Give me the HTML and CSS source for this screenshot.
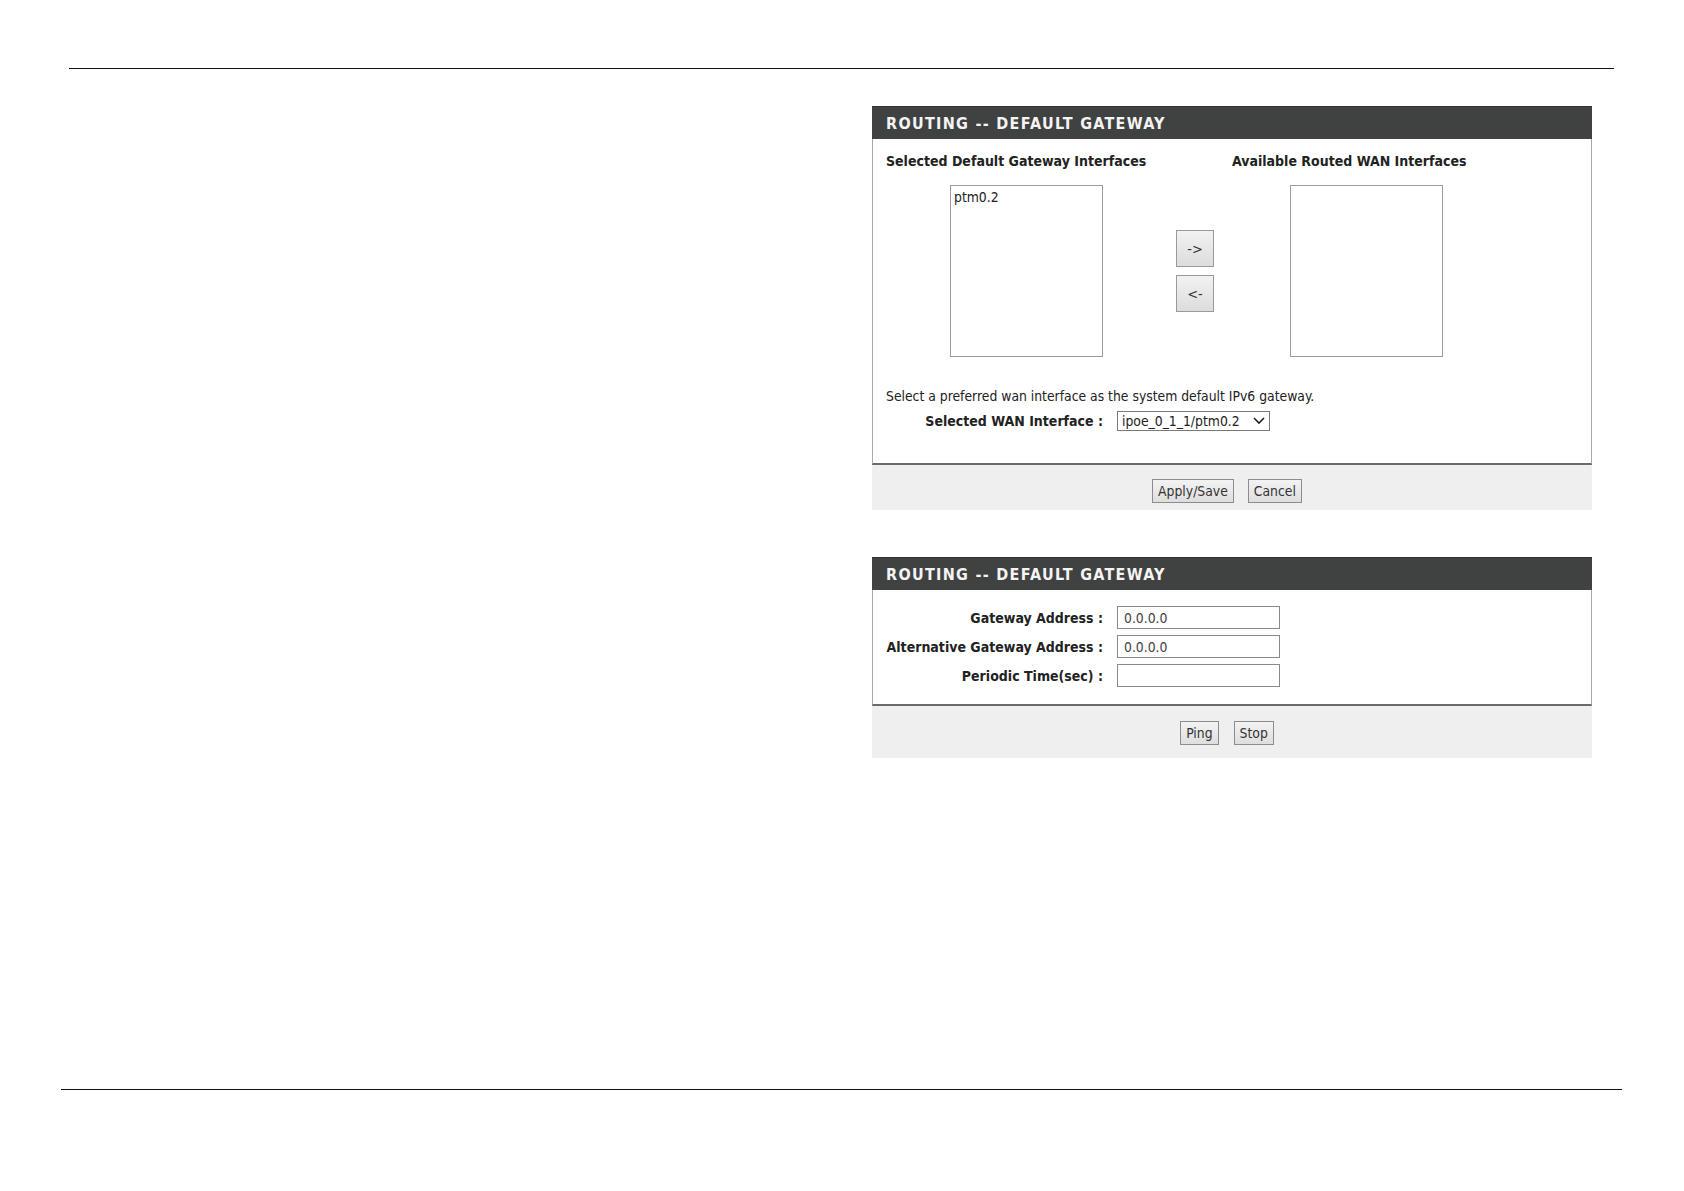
FILE: index.html
```html
<!DOCTYPE html>
<html>
<head>
<meta charset="utf-8">
<title>Routing -- Default Gateway</title>
<link rel="stylesheet" href="styles.css">
</head>
<body>
<div class="page">
  <div class="rule rule-top"></div>

  <div class="panels">
    <section class="panel">
      <div class="panel-head">ROUTING -- DEFAULT GATEWAY</div>
      <div class="panel-body body-gw">
        <div class="col-titles">
          <div class="col-title first">Selected Default Gateway Interfaces</div>
          <div class="col-title">Available Routed WAN Interfaces</div>
        </div>
        <div class="lists">
          <div class="listbox"><div class="opt">ptm0.2</div></div>
          <div class="movers">
            <button class="mover">-&gt;</button>
            <button class="mover">&lt;-</button>
          </div>
          <div class="listbox"></div>
        </div>
        <p class="hint">Select a preferred wan interface as the system default IPv6 gateway.</p>
        <div class="wan-row">
          <label class="wan-label">Selected WAN Interface :</label>
          <div class="select-wrap">
            <select class="select"><option>ipoe_0_1_1/ptm0.2</option></select>
            <svg class="chev" width="12" height="8" viewBox="0 0 12 8"><path d="M1 1 L6 6 L11 1" fill="none" stroke="#222" stroke-width="1.6"/></svg>
          </div>
        </div>
      </div>
      <div class="panel-foot foot-1">
        <button class="btn">Apply/Save</button>
        <button class="btn">Cancel</button>
      </div>
    </section>

    <section class="panel">
      <div class="panel-head">ROUTING -- DEFAULT GATEWAY</div>
      <div class="panel-body body-ping">
        <div class="form-row">
          <label class="form-label">Gateway Address :</label>
          <input class="field" type="text" value="0.0.0.0">
        </div>
        <div class="form-row">
          <label class="form-label">Alternative Gateway Address :</label>
          <input class="field" type="text" value="0.0.0.0">
        </div>
        <div class="form-row">
          <label class="form-label">Periodic Time(sec) :</label>
          <input class="field" type="text" value="">
        </div>
      </div>
      <div class="panel-foot foot-2">
        <button class="btn">Ping</button>
        <button class="btn">Stop</button>
      </div>
    </section>
  </div>

  <div class="rule rule-bottom"></div>
</div>
</body>
</html>
```

FILE: styles.css
```css
html, body {
  margin: 0;
  padding: 0;
  background: #ffffff;
}

body {
  font-family: "DejaVu Sans Condensed", "DejaVu Sans", "Liberation Sans", sans-serif;
  color: #222;
  font-size: 13.8px;
}

.page {
  width: 1684px;
  height: 1191px;
  display: flex;
  flex-direction: column;
}

.rule {
  height: 0;
  border-top: 1.5px solid #111;
}

.rule-top {
  margin: 68px 0 0 69px;
  width: 1545px;
}

.rule-bottom {
  margin: 0 0 0 61px;
  width: 1561px;
}

.panels {
  margin: 37px 0 0 872px;
  width: 720px;
  height: 983px;
  display: flex;
  flex-direction: column;
  gap: 47px;
}

.panel {
  display: flex;
  flex-direction: column;
}

.panel-head {
  height: 33px;
  background: #404141;
  color: #f4f4f4;
  font-weight: bold;
  font-size: 16px;
  letter-spacing: 1.3px;
  line-height: 33px;
  padding-left: 14px;
  border-top: 1px solid #333;
  box-sizing: border-box;
}

.panel-body {
  border-left: 1px solid #a8a8a8;
  border-right: 1px solid #a8a8a8;
  border-bottom: 2px solid #6a6a6a;
  background: #fff;
  box-sizing: border-box;
}

.body-gw {
  height: 326px;
  padding: 12px 0 0 13px;
}

.col-titles {
  display: flex;
  font-weight: bold;
  font-size: 14px;
  line-height: 20px;
}

.col-title.first {
  width: 346px;
}

.lists {
  display: flex;
  margin: 14px 0 0 64px;
  align-items: flex-start;
}

.listbox {
  width: 153px;
  height: 172px;
  border: 1px solid #9c9c9c;
  box-sizing: border-box;
  background: #fff;
}

.opt {
  padding: 3px 0 0 3px;
  font-size: 13.8px;
  line-height: 16px;
}

.movers {
  display: flex;
  flex-direction: column;
  gap: 8px;
  margin: 45px 76px 0 73px;
}

.mover {
  width: 38px;
  height: 37px;
  padding: 0;
  background: linear-gradient(#f2f2f2, #dcdcdc);
  border: 1px solid #9a9a9a;
  box-sizing: border-box;
  font-family: inherit;
  font-size: 14.5px;
  color: #333;
}

.hint {
  margin: 30px 0 0 0;
  line-height: 18px;
  font-size: 13.8px;
}

.wan-row {
  display: flex;
  align-items: center;
  margin-top: 6px;
}

.wan-label {
  width: 231px;
  text-align: right;
  font-weight: bold;
  font-size: 14px;
  padding-right: 14px;
  box-sizing: border-box;
}

.select-wrap {
  position: relative;
  width: 153px;
  height: 20px;
}

.select {
  appearance: none;
  -webkit-appearance: none;
  width: 153px;
  height: 20px;
  margin: 0;
  padding: 0 0 0 4px;
  border: 1px solid #7a7a7a;
  border-radius: 0;
  background: #fff;
  font-family: inherit;
  font-size: 13.8px;
  color: #222;
  box-sizing: border-box;
}

.chev {
  position: absolute;
  right: 5px;
  top: 6px;
  pointer-events: none;
}

.panel-foot {
  background: #efefef;
  display: flex;
  justify-content: center;
  gap: 14px;
  padding-right: 10px;
  box-sizing: border-box;
}

.foot-1 {
  height: 45px;
  padding-top: 14px;
}

.foot-2 {
  height: 52px;
  padding-top: 15px;
  gap: 15px;
}

.btn {
  height: 24px;
  padding: 0 5px;
  background: linear-gradient(#f3f3f3, #dedede);
  border: 1px solid #8c8c8c;
  border-radius: 0;
  font-family: inherit;
  font-size: 13.8px;
  color: #333;
  box-sizing: border-box;
}

.body-ping {
  height: 116px;
  padding: 16px 0 0 0;
  display: flex;
  flex-direction: column;
  gap: 6px;
}

.form-row {
  display: flex;
  align-items: center;
  height: 23px;
}

.form-label {
  width: 244px;
  text-align: right;
  font-weight: bold;
  font-size: 14px;
  padding-right: 14px;
  box-sizing: border-box;
}

.field {
  width: 163px;
  height: 23px;
  margin: 0;
  padding: 0 6px;
  border: 1px solid #8a8a8a;
  border-radius: 0;
  font-family: inherit;
  font-size: 13.8px;
  color: #444;
  box-sizing: border-box;
}
```
